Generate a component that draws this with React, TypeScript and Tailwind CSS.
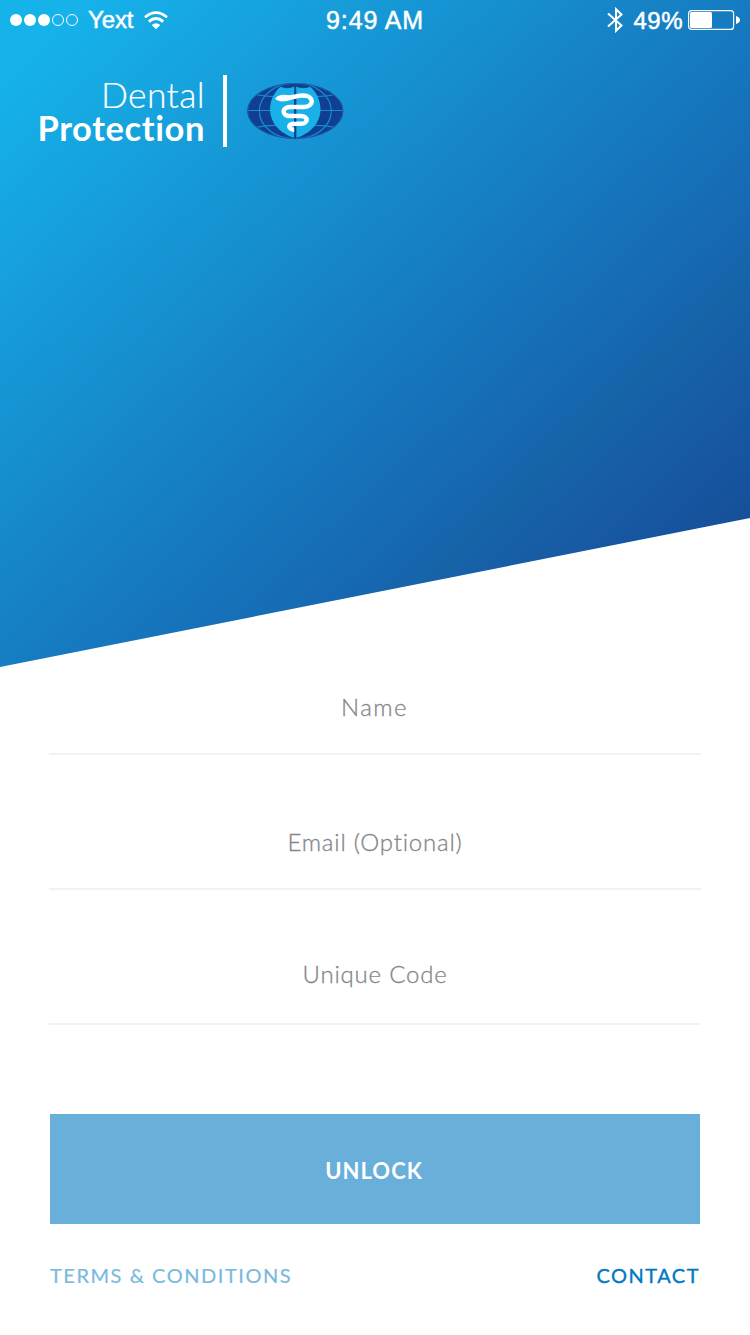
import React from "react";

function StatusBar() {
  return (
    <div className="flex h-10 items-center font-['Liberation_Sans',sans-serif] text-[24px] leading-10">
      <div className="flex w-[250px] items-center pl-[10px]">
        <svg width="70" height="14" viewBox="0 0 70 14" className="shrink-0">
          <circle cx="6" cy="7" r="6" fill="#fff" />
          <circle cx="20" cy="7" r="6" fill="#fff" />
          <circle cx="34" cy="7" r="6" fill="#fff" />
          <circle cx="48" cy="7" r="5.5" fill="none" stroke="#fff" />
          <circle cx="62" cy="7" r="5.5" fill="none" stroke="#fff" />
        </svg>
        <span className="ml-[8px] w-[46px] tracking-[-0.1px] [-webkit-text-stroke:0.5px_#fff]">Yext</span>
        <svg width="24" height="19" viewBox="0 0 24 19" className="ml-[10px] shrink-0">
          <g fill="none" stroke="#fff" strokeWidth="2.8">
            <path d="M1 6.2Q12 -3 23 6.2" />
            <path d="M4.8 10.6Q12 4.5 19.2 10.6" />
          </g>
          <path d="M7.7 14Q12 10.5 16.3 14L12 18.3Z" fill="#fff" />
        </svg>
      </div>
      <div className="flex w-[250px] justify-center">
        <span className="whitespace-nowrap text-[25px] tracking-[0.9px] [-webkit-text-stroke:0.5px_#fff]">9:49 AM</span>
      </div>
      <div className="flex w-[250px] items-center justify-end pr-[9px]">
        <svg width="17" height="26" viewBox="0 0 17 26" className="mr-[9px] shrink-0">
          <path d="M1 6.5L14.5 18.5L9 23.8V2.2L14.5 7.5L1 19.5" fill="none" stroke="#fff" strokeWidth="2" />
        </svg>
        <span className="mr-[5px] pt-px tracking-[0.5px] [-webkit-text-stroke:0.5px_#fff]">49%</span>
        <svg width="53" height="20" viewBox="0 0 53 20" className="shrink-0">
          <rect x="0.6" y="0.6" width="45" height="18.8" rx="3" fill="none" stroke="#fff" strokeWidth="1.2" />
          <rect x="2" y="2" width="22" height="16" rx="1.5" fill="#fff" />
          <path d="M48 6Q52 7.5 52 10T48 14Z" fill="#fff" />
        </svg>
      </div>
    </div>
  );
}

function GlobeMark() {
  return (
    <svg width="98" height="58" viewBox="0 0 98 58">
      <defs>
        <clipPath id="globe">
          <ellipse cx="48.3" cy="29" rx="48" ry="28" />
        </clipPath>
      </defs>
      <ellipse cx="48.3" cy="29" rx="48" ry="28" fill="#103f92" />
      <g clipPath="url(#globe)" fill="none" stroke="#188bd0" strokeWidth="1.2">
        <ellipse cx="48.3" cy="29" rx="36" ry="28" />
        <path d="M0 28.5H98M8 12.5Q20 15 32 14.5M88.6 12.5Q77 15 65 14.5M8 45.5Q20 43 32 43.5M88.6 45.5Q77 43 65 43.5" />
      </g>
      <ellipse cx="48.3" cy="29" rx="47.5" ry="27.5" fill="none" stroke="#1b5cab" strokeWidth="1" />
      <path d="M33.5 4.8C38 6.8 43 6.5 48.3 4.2C53.6 6.5 58.6 6.8 63.1 4.8C70 10.5 73.5 19 73.5 27.5C73.5 40 64 52 48.3 56C32.6 52 23.1 40 23.1 27.5C23.1 19 26.6 10.5 33.5 4.8Z" fill="#18b2e9" />
      <path d="M48.2 4V56.5" stroke="#103f92" strokeWidth="2" />
      <path d="M39 15.8C46 15.8 49 13.6 56 13.6C67.5 13.6 67.5 24.8 57 25H43C34.5 25.2 34.5 34 43 34H54C61.5 34 61.5 41.8 54 41.8H46.5C40.5 42 40.5 47.8 49 48" fill="none" stroke="#fff" strokeWidth="4.5" />
      <path d="M28 16.8C30.5 12.8 36 11.8 42 13.4L44 17.8C38 20 32 20.2 28 16.8Z" fill="#fff" />
      <path d="M48.2 17V22.6M48.2 27.4V31.6M48.2 36.4V39.4M48.2 44.2V56" stroke="#103f92" strokeWidth="2" />
    </svg>
  );
}

function Brand() {
  return (
    <div className="mt-[35px] flex h-[72px] items-start pl-[37px]">
      <div className="flex w-[168px] flex-col items-end whitespace-nowrap">
        <span className="mt-[4px] text-[35.5px] font-light leading-[31px] tracking-[0.4px] [-webkit-text-stroke:0.2px_#fff]">Dental</span>
        <span className="text-[34.5px] font-bold leading-[35px] tracking-[0.6px] [font-variant-ligatures:none]">Protection</span>
      </div>
      <div className="ml-[18px] h-[72px] w-[4px] bg-white" />
      <div className="ml-[20px] mt-[7px]">
        <GlobeMark />
      </div>
    </div>
  );
}

export default function App() {
  return (
    <main className="flex h-[1335px] w-[750px] flex-col overflow-hidden bg-white font-['Lato',sans-serif]">
      <header className="h-[667px] shrink-0 bg-[linear-gradient(137deg,#16b3ea_5%,#1666b1_68.5%,#1665a9_70.5%,#1759a4_80%,#164e98_90%)] text-white [clip-path:polygon(0_0,100%_0,100%_518px,0_667px)]">
        <StatusBar />
        <Brand />
      </header>
      <form className="flex flex-col px-[49px] text-center text-[24px] font-light leading-[30px] tracking-[0.8px] text-[#85858a] [-webkit-text-stroke:0.3px_#85858a] [font-variant-ligatures:none]">
        <label className="h-[88px] border-b-2 border-[#f2f2f3] pr-[1px] pt-[25px] tracking-[1.4px]">Name</label>
        <label className="h-[135px] border-b-2 border-[#f2f2f3] pt-[72px]">Email (Optional)</label>
        <label className="h-[135px] border-b-2 border-[#f2f2f3] pt-[69px]">Unique Code</label>
        <button type="button" className="mx-px mt-[89px] h-[110px] bg-[#68afda] pr-[2px] pt-[3px] text-[22px] font-bold tracking-[1px] text-white [-webkit-text-stroke:0px]">
          UNLOCK
        </button>
      </form>
      <footer className="mt-[38px] flex justify-between px-[50px] text-[20px] leading-[26px]">
        <a className="tracking-[1.54px] text-[#7ab9df] [-webkit-text-stroke:0.2px_#7ab9df]">TERMS &amp; CONDITIONS</a>
        <a className="tracking-[1.5px] text-[#0078c4] [-webkit-text-stroke:0.35px_#0078c4]">CONTACT</a>
      </footer>
    </main>
  );
}
